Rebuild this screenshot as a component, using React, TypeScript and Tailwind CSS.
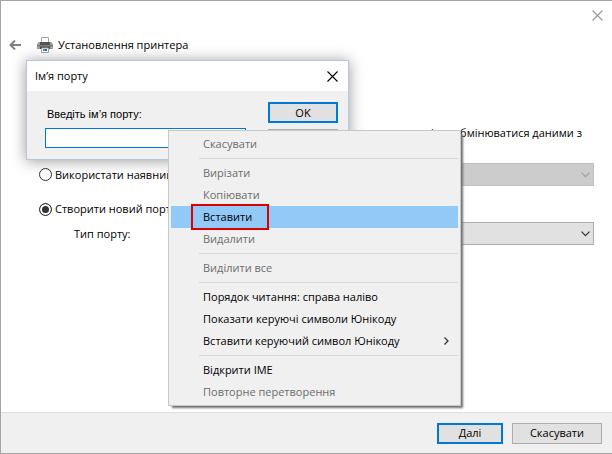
import React from "react";

function Close() {
  return (
    <svg viewBox="0 0 11 11" className="size-[11px]" fill="none" stroke="currentColor" strokeWidth="1.1" aria-hidden="true">
      <path d="M0.5 0.5 10.5 10.5M10.5 0.5 0.5 10.5" />
    </svg>
  );
}

function Printer() {
  return (
    <svg viewBox="0 0 16 16" className="size-4" aria-hidden="true">
      <path d="M4.500 6V.500h7V6" fill="#fff" stroke="#a3a3a3" />
      <path d="M1.500 5h13L16 7v5H0V7z" fill="#a0a0a0" />
      <path d="M3 5h10v3H3z" fill="#555" />
      <path d="M0 8h16v1.500H0z" fill="#7c7c7c" />
      <path d="M3 9.500h10V12H3z" fill="#444" />
      <path d="M14 10h1v1h-1z" fill="#7fe07f" />
      <path d="M4.500 11h7v4.500h-7z" fill="#fff" stroke="#a3a3a3" />
      <path d="M6 12h2v2H6z" fill="#3fa66b" />
      <path d="M8 12h2v2H8z" fill="#1874c4" />
    </svg>
  );
}

type Item = { label: string; disabled?: boolean; active?: boolean; submenu?: boolean };
const groups: Item[][] = [
  [{ label: "Скасувати", disabled: true }],
  [
    { label: "Вирізати", disabled: true },
    { label: "Копіювати", disabled: true },
    { label: "Вставити", active: true },
    { label: "Видалити", disabled: true },
  ],
  [{ label: "Виділити все", disabled: true }],
  [
    { label: "Порядок читання: справа наліво" },
    { label: "Показати керуючі символи Юнікоду" },
    { label: "Вставити керуючий символ Юнікоду", submenu: true },
  ],
  [{ label: "Відкрити IME" }, { label: "Повторне перетворення", disabled: true }],
];

function ContextMenu() {
  return (
    <div role="menu" className="absolute left-[167px] top-[129px] w-[293px] border border-[#c8c8c8] bg-[#f0f0f0] p-[2px] shadow-[3px_3px_2px_-1px_#707070]">
      {groups.map((group, index) => (
        <div key={index} role="group">
          {index > 0 && <div role="separator" className="my-[3px] ml-7 h-px bg-[#d7d7d7]" />}
          {group.map((item) => (
            <button
              key={item.label}
              role="menuitem"
              disabled={item.disabled}
              className={`relative flex h-[22px] w-full items-center justify-between pl-8 pr-[9px] text-left ${item.disabled ? "text-[#6d6d6d]" : "text-black"} ${item.active ? "bg-[#91c9f7]" : ""}`}
            >
              {item.label}
              {item.submenu && (
                <svg viewBox="0 0 5 8" className="h-2 w-[5px]" fill="none" stroke="#333" strokeWidth="1.3" aria-hidden="true">
                  <path d="m.500.500 3.500 3.500-3.500 3.500" />
                </svg>
              )}
              {item.active && <span className="absolute -top-0.5 left-5 h-[26px] w-[78px] border-2 border-[#dc0000]" />}
            </button>
          ))}
        </div>
      ))}
    </div>
  );
}

function NameDialog() {
  return (
    <section role="dialog" aria-labelledby="dialog-title" className="absolute left-[25px] top-[59px] w-[323px] border border-[#b4c7dc] bg-[#f0f0f0] shadow-[0_1px_14px_rgba(0,0,0,0.4)]">
      <header className="flex h-[30px] items-center justify-between bg-white pl-2 pr-[10px]">
        <h2 id="dialog-title">Ім’я порту</h2>
        <button aria-label="Закрити" className="text-black"><Close /></button>
      </header>
      <div className="flex h-[68px] items-start justify-between pl-[18px] pr-[10px] pt-[11px]">
        <div className="w-[201px]">
          <label htmlFor="port-name" className="mb-[5px] block h-[21px] pl-0.5 font-['Liberation_Sans',sans-serif] leading-6">Введіть ім’я порту:</label>
          <input id="port-name" className="block h-5 w-full border border-[#0078d7] bg-white px-1 outline-none" />
        </div>
        <div className="grid w-[70px] gap-[6px]">
          <button className="h-[21px] border-2 border-[#0078d7] bg-[#e1e1e1]">OK</button>
          <button aria-label="Скасувати" className="h-[21px] border border-[#adadad] bg-[#e1e1e1]" />
        </div>
      </div>
    </section>
  );
}

const radio = "size-[13px] shrink-0 appearance-none rounded-full border border-[#333] bg-white checked:bg-[#333] checked:shadow-[inset_0_0_0_2px_#fff]";

function PortSelect({ id, disabled, label }: { id: string; disabled?: boolean; label?: string }) {
  return (
    <div className={`relative min-w-0 flex-1 ${disabled ? "text-[#a0a0a0]" : "text-[#333]"}`}>
      <select
        id={id}
        aria-label={label}
        disabled={disabled}
        className={`block h-[23px] w-full appearance-none border opacity-100 ${disabled ? "border-[#bfbfbf] bg-[#cccccc]" : "border-[#adadad] bg-[#e1e1e1]"}`}
      />
      <svg viewBox="0 0 9 6" className="pointer-events-none absolute right-1 top-[9px] h-[6px] w-[9px]" fill="none" stroke="currentColor" strokeWidth="1.2" aria-hidden="true">
        <path d="m.500.700 4 4 4-4" />
      </svg>
    </div>
  );
}

export default function App() {
  return (
    <div className="relative flex min-h-screen flex-col border-b border-l border-t border-[#a5a5a5] bg-white font-['Open_Sans','Noto_Sans',sans-serif] text-[11px] leading-4 text-black">
      <div className="flex h-7 items-center justify-end pr-[9px]">
        <button aria-label="Закрити вікно" className="text-[#999]"><Close /></button>
      </div>
      <header className="flex h-8 items-center pl-2">
        <button aria-label="Назад" className="mr-4 text-[#808080]">
          <svg viewBox="0 0 12 10" className="h-[10px] w-3" fill="none" stroke="currentColor" strokeWidth="2" aria-hidden="true">
            <path d="M12 5H1M6 .5 1.500 5 6 9.500" />
          </svg>
        </button>
        <Printer />
        <h1 className="ml-[5px]">Установлення принтера</h1>
      </header>
      <main className="flex-1 pl-[38px] pr-[18px] pt-16">
        <p className="flex h-4 items-center justify-end pr-3">можливість обмінюватися даними з</p>
        <div className="mt-[22px] flex items-center">
          <label className="flex w-[230px] items-center gap-[3px]">
            <input type="radio" name="port" className={radio} />
            Використати наявний
          </label>
          <PortSelect id="existing-port" label="Наявний порт" disabled />
        </div>
        <label className="mt-[11px] flex h-6 items-center gap-[3px]">
          <input type="radio" name="port" defaultChecked className={radio} />
          Створити новий порт:
        </label>
        <div className="mt-[1px] flex items-center">
          <label htmlFor="port-type" className="w-[230px] pl-[35px]">Тип порту:</label>
          <PortSelect id="port-type" />
        </div>
      </main>
      <footer className="flex h-[41px] items-center justify-end gap-[9px] border-t border-[#dfdfdf] bg-[#f0f0f0] pr-[10px]">
        <button className="h-[21px] w-[66px] border-2 border-[#0078d7] bg-[#e1e1e1]">Далі</button>
        <button className="h-[21px] w-[90px] border border-[#adadad] bg-[#e1e1e1]">Скасувати</button>
      </footer>
      <NameDialog />
      <ContextMenu />
    </div>
  );
}
